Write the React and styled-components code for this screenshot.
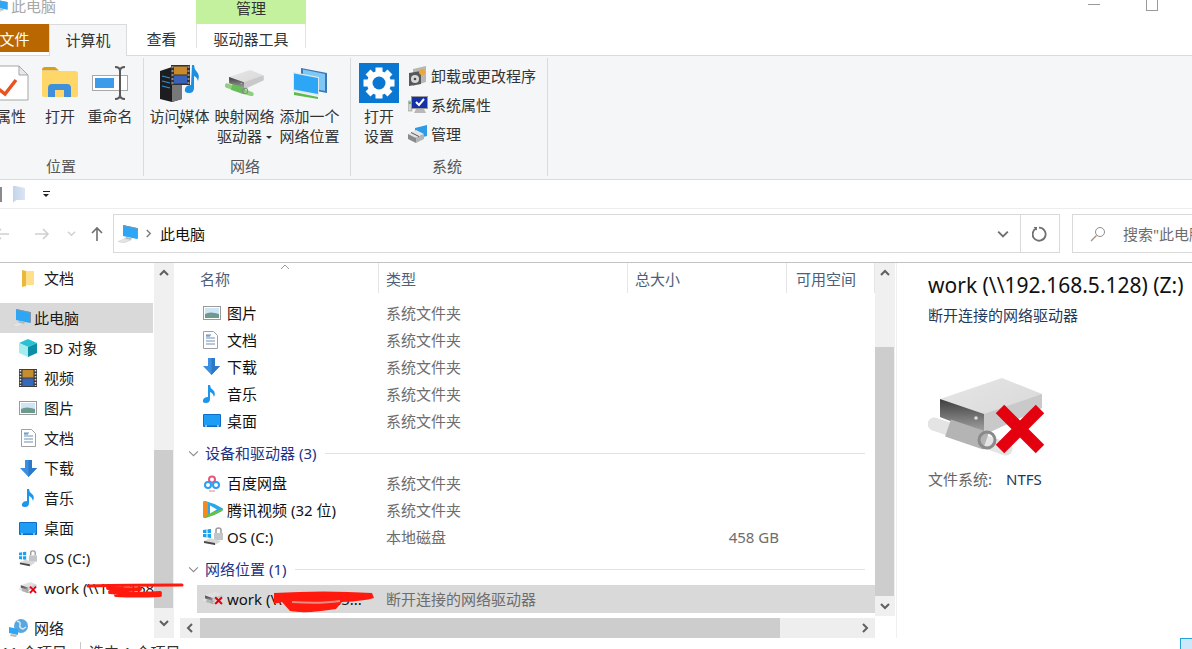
import React from 'react'
import styled, { createGlobalStyle } from 'styled-components'

/* drawings */
const Chevron = ({ dir = 'down', size = 10, color = '#606060', weight = 2 }) => {
  const turn = { down: 0, up: 180, left: 90, right: -90 }[dir]
  return (
    <svg width={size} height={size} viewBox="0 0 10 10">
      <path d="M1 3l4 4 4-4" fill="none" stroke={color} strokeWidth={weight} transform={`rotate(${turn} 5 5)`} />
    </svg>
  )
}

const ArrowIcon = ({ dir = 'right', color = '#d0d0d0', size = 16 }) => (
  <svg width={size} height={size} viewBox="0 0 16 16">
    <path d="M1 8h13M9 3l5 5-5 5" fill="none" stroke={color} strokeWidth="1.6" transform={dir === 'left' ? 'rotate(180 8 8)' : dir === 'up' ? 'rotate(-90 8 8)' : undefined} />
  </svg>
)

const PropsIcon = () => (
  <svg width="36" height="36" viewBox="0 0 36 36">
    <path d="M1 1h25l9 9v25H1z" fill="#fff" stroke="#a6a6a6" />
    <path d="M26 1v9h9z" fill="#e8e8e8" stroke="#a6a6a6" />
    <path d="M3 22l9 7 11-14" fill="none" stroke="#e8531f" strokeWidth="3.4" />
  </svg>
)

const OpenIcon = () => (
  <svg width="36" height="32" viewBox="0 0 36 32">
    <path d="M0 3q0-3 3-3h10l4 3.500h-17z" fill="#d9a010" />
    <path d="M0 4h33q3 0 3 3v21q0 2-2 2H2q-2 0-2-2z" fill="#ffd768" />
    <path d="M6 30V21q0-4 4-4h15q4 0 4 4v9h-7v-7h-9v7z" fill="#3f90d8" />
  </svg>
)

const RenameIcon = () => (
  <svg width="36" height="34" viewBox="0 0 36 34">
    <rect x="0.500" y="9.500" width="35" height="15" fill="#fff" stroke="#a8a8a8" />
    <rect x="3" y="12" width="19" height="10" fill="#3d9be9" />
    <path d="M23 1q5 0 5 4v24q0 4-5 4M33 1q-5 0-5 4v24q0 4 5 4" fill="none" stroke="#5a5a5a" strokeWidth="2" />
  </svg>
)

const MediaIcon = () => (
  <svg width="41" height="38" viewBox="0 0 41 38">
    <path d="M1 7l12-4 10 3v29l-10 3-12-3z" fill="#1d1d1f" />
    <path d="M13 38V9l10-3v29z" fill="#77787a" />
    <path d="M3 12l8 2M3 17l8 2M3 22l8 2" stroke="#2f8fe0" strokeWidth="1.200" />
    <rect x="12" y="1" width="19" height="20" fill="#333" />
    <rect x="15" y="2.500" width="13" height="8" fill="#c98a2c" />
    <rect x="15" y="11.500" width="13" height="8" fill="#3a62b8" />
    <path d="M12.500 3h2M12.500 7h2M12.500 11h2M12.500 15h2M12.500 19h2M28.500 3h2M28.500 7h2M28.500 11h2M28.500 15h2M28.500 19h2" stroke="#ddd" />
    <path d="M33 1h2q0 4 3 7t1 9q-1-4-4-5v12q0 5-5 5t-4-4 6-4z" fill="#1c8fe3" />
  </svg>
)

const DriveIcon = ({ width, tube = '#b4b4b4', end = '#e4e4e4', cross }) => (
  <svg width={width} viewBox="0 0 118 78" style={{ display: 'block' }}>
    <defs>
      <linearGradient id="driveFront" x1="0" y1="0" x2="0" y2="1">
        <stop offset="0" stopColor="#3e3e3e" />
        <stop offset="1" stopColor="#a9a9a9" />
      </linearGradient>
      <linearGradient id="driveTop" x1="0" y1="0" x2="1" y2="1">
        <stop offset="0" stopColor="#e6e6e6" />
        <stop offset="1" stopColor="#d6d6d6" />
      </linearGradient>
    </defs>
    <path d="M6 46L78 71" stroke={end} strokeWidth="13" strokeLinecap="round" />
    <path d="M12 21L74 0l40 16v14L60 55l-4 1-44-17z" fill="url(#driveTop)" />
    <path d="M56 36l58-20v14L60 55l-4 1z" fill="#c9c9c9" />
    <path d="M12 21l44 15v20L12 39z" fill="url(#driveFront)" />
    <circle cx="48" cy="40" r="1.800" fill="#ddd" />
    <path d="M20 50L58 63" stroke={tube} strokeWidth="18" />
    <circle cx="59" cy="62" r="8" fill="none" stroke="#8a8a8a" strokeWidth="3" />
    {cross && <path d="M72 31l40 40M112 31L72 71" stroke="#e3000f" strokeWidth="12" />}
  </svg>
)

const NetPlaceIcon = () => (
  <svg width="36" height="32" viewBox="0 0 36 32">
    <path d="M9 1l26 5v20l-26-5z" fill="#3a78b5" />
    <path d="M11 2.500l22 4.500v17l-22-4.500z" fill="#7fc7f5" />
    <path d="M1 5l26 5v19l-26-5z" fill="#dfe8ef" />
    <path d="M2 6.500l24 4.500v16l-24-4.500z" fill="#2da7f5" />
    <path d="M2 25l24 5v2l-24-4z" fill="#5dbb4e" />
  </svg>
)

const GearTile = () => (
  <svg width="40" height="40" viewBox="0 0 40 40">
    <rect width="40" height="40" fill="#0a78d2" />
    {[0, 45, 90, 135, 180, 225, 270, 315].map((a) => (
      <rect key={a} x="16.500" y="4.500" width="7" height="7" fill="#fff" transform={`rotate(${a} 20 20)`} />
    ))}
    <circle cx="20" cy="20" r="12" fill="#fff" />
    <circle cx="20" cy="20" r="6.500" fill="#0a78d2" />
  </svg>
)

const UninstallIcon = () => (
  <svg width="20" height="20" viewBox="0 0 20 20">
    <path d="M5 3l13-3v16l-13 4z" fill="#b8b8b0" />
    <path d="M1 7l12-2v13l-12 2z" fill="#55585a" />
    <circle cx="7" cy="13" r="4" fill="#d8d8d8" />
    <circle cx="7" cy="13" r="1.300" fill="#4a4a4a" />
    <circle cx="14" cy="6" r="3" fill="#f0a53a" />
  </svg>
)

const SysPropsIcon = () => (
  <svg width="20" height="18" viewBox="0 0 20 18">
    <rect x="0" y="5" width="4" height="10" fill="#cfd2d2" stroke="#888" strokeWidth="0.500" />
    <rect x="0.800" y="6" width="2" height="2" fill="#4cc04c" />
    <rect x="3.500" y="0.500" width="16" height="12" fill="#1630a8" stroke="#9a9a9a" />
    <path d="M8 6l3 3 5-6" fill="none" stroke="#fff" strokeWidth="2" />
    <path d="M8 13h8l2 4H6z" fill="#b8b8b8" />
  </svg>
)

const ManageIcon = () => (
  <svg width="20" height="18" viewBox="0 0 20 18">
    <path d="M7 3l12-3v11l-12 3z" fill="#2e9be6" />
    <path d="M0 9l8-4 8 4-8 4z" fill="#e4e4e4" />
    <path d="M0 9v5l8 4v-5z" fill="#8a8a8a" />
    <path d="M8 13v5l8-4V9z" fill="#b5b5b5" />
    <path d="M3 7.500l8 4" stroke="#555" />
  </svg>
)

const ComputerIcon = ({ width = 20 }) => (
  <svg width={width} viewBox="0 0 20 18" style={{ display: 'block' }}>
    <path d="M5 0l14 3v11L5 11z" fill="#2da7f5" />
    <path d="M5 0l14 3v1L5 1zM19 3v11l1-.5V3z" fill="#7d97ac" />
    <path d="M8 12l6 1.500-1 1.500-6-1.200z" fill="#aeb3b6" />
    <path d="M0 16.500l7-3 6 1.500-7 3z" fill="#e2e4e6" stroke="#c9ccce" strokeWidth="0.500" />
  </svg>
)

const CubeIcon = () => (
  <svg width="18" height="18" viewBox="0 0 18 18">
    <path d="M9 0l9 4-9 4-9-4z" fill="#27c3d5" />
    <path d="M0 4l9 4v10l-9-4z" fill="#a5ecef" />
    <path d="M9 8l9-4v10l-9 4z" fill="#0b8fa6" />
  </svg>
)

const FilmIcon = () => (
  <svg width="18" height="18" viewBox="0 0 18 18">
    <rect width="18" height="18" fill="#3d3d3d" />
    <rect x="3.500" y="1" width="11" height="7.500" fill="#c68d2e" />
    <rect x="3.500" y="9.500" width="11" height="7.500" fill="#3868bc" />
    <path d="M1.500 1v16M16.500 1v16" stroke="#ddd" strokeWidth="1.500" strokeDasharray="1.500 1.500" />
  </svg>
)

const PictureIcon = () => (
  <svg width="18" height="14" viewBox="0 0 18 14">
    <rect x="0.500" y="0.500" width="17" height="13" fill="#fff" stroke="#9a9a9a" />
    <rect x="2" y="2" width="14" height="10" fill="#cfe4f5" />
    <path d="M2 8q5-3 14 0v4H2z" fill="#6d9a8e" />
  </svg>
)

const DocIcon = () => (
  <svg width="15" height="18" viewBox="0 0 15 18">
    <path d="M0.500 0.500h10l4 4v13h-14z" fill="#fff" stroke="#a0a0a0" />
    <path d="M3 4h5M3 7h9M3 10h9M3 13h9" stroke="#6f8fb0" />
    <path d="M3 5h4" stroke="#2d7fd0" />
  </svg>
)

const DownloadIcon = () => (
  <svg width="17" height="17" viewBox="0 0 17 17">
    <path d="M5 0h7v8h5l-8.500 9L0 8h5z" fill="#3a8fe0" />
    <path d="M8.500 0h3.500v8h5l-8.500 9z" fill="#2d78c8" />
  </svg>
)

const NoteIcon = () => (
  <svg width="12" height="18" viewBox="0 0 12 18">
    <path d="M5 0h2q0 3 3 5t1 7q-1-4-4-5v7q0 4-4 4t-3-3 5-3z" fill="#1c96ec" />
  </svg>
)

const DesktopIcon = () => (
  <svg width="18" height="13" viewBox="0 0 18 13">
    <rect width="18" height="13" rx="1" fill="#0f6cc8" />
    <rect x="1" y="1" width="16" height="10.500" fill="#1f9cf3" />
    <path d="M2 12h2M14 12h2" stroke="#fff" />
  </svg>
)

const OsDriveIcon = () => (
  <svg width="20" height="19" viewBox="0 0 20 19">
    <path d="M0 3l3.500-.5V6H0zM4.500 2.300L8 2v4H4.500zM0 7h3.500v3.500L0 10zM4.500 7H8v4l-3.500-.5z" fill="#19a3ee" />
    <path d="M13 6V3q0-2 2.500-2T18 3v3" fill="none" stroke="#9a9a9a" strokeWidth="1.500" />
    <rect x="11" y="6" width="9" height="7" fill="#c3c6c8" />
    <path d="M1 14l6-3 11 3-6 4z" fill="#d8d8d8" />
    <path d="M1 14l11 2v2L1 16z" fill="#4a4a4a" />
  </svg>
)

const GlobeIcon = () => (
  <svg width="20" height="18" viewBox="0 0 20 18">
    <circle cx="12" cy="7" r="7" fill="#5aa7df" />
    <path d="M8 2q4 1 3 4t3 4l3-2" fill="none" stroke="#d6ebf8" strokeWidth="1.500" />
    <path d="M0 8l9 2v6l-9-2z" fill="#2da7f5" />
    <path d="M2 15l6 1-1 2-6-1z" fill="#b5b9bc" />
  </svg>
)

const BaiduIcon = () => (
  <svg width="18" height="18" viewBox="0 0 18 18">
    <circle cx="9" cy="5.500" r="3" fill="none" stroke="#e9567c" strokeWidth="2" />
    <circle cx="5" cy="11" r="3" fill="none" stroke="#2b9ff2" strokeWidth="2" />
    <circle cx="13" cy="11" r="3" fill="none" stroke="#2b9ff2" strokeWidth="2" />
    <path d="M6 17h6" stroke="#f1a9bb" strokeWidth="1.500" />
  </svg>
)

const TencentIcon = () => (
  <svg width="20" height="19" viewBox="0 0 20 19">
    <path d="M2 1q9 2 17 7 2 1.500 0 3-8 5-17 7-2 0-2-2V3q0-2 2-2z" fill="#2aa7e8" />
    <path d="M2 1q-2 0-2 2v13q0 2 2 2l3-1V2z" fill="#f58a1f" />
    <path d="M2 18q8-2 17-7l1-2.500L5 14z" fill="#67c23a" />
    <path d="M7 5.500l7 4-7 4z" fill="#fff" />
  </svg>
)

const icons = {
  cube: CubeIcon,
  film: FilmIcon,
  picture: PictureIcon,
  doc: DocIcon,
  download: DownloadIcon,
  note: NoteIcon,
  desktop: DesktopIcon,
  os: OsDriveIcon,
  baidu: BaiduIcon,
  tencent: TencentIcon,
  work: () => <DriveIcon width={20} cross />
}

/* the red pen strokes someone drew over the address */
const NavScribble = () => (
  <ScribbleBox $left={86} $top={9} $width={98}>
    <svg width="98" height="18" viewBox="0 0 98 18">
      <path d="M2 4q40 -1 94 -1" fill="none" stroke="#ff1a0d" strokeWidth="3" strokeLinecap="round" />
      <path d="M22 6q20 2 32 1M24 10q30 3 50 1M30 13q20 1 44 0" fill="none" stroke="#ff1a0d" strokeWidth="4" strokeLinecap="round" />
    </svg>
  </ScribbleBox>
)

const RowScribble = () => (
  <ScribbleBox $left={77} $top={6} $width={101}>
    <svg width="101" height="22" viewBox="0 0 101 22">
      <path d="M0 2q50-3 98 0l2 5q-10 3-32 4l-6 7q-30 5-46 2l-8-9q-6 2-8 1z" fill="#ff1a0d" />
      <path d="M18 11q28 2 48-1" stroke="#e88a84" strokeWidth="2" fill="none" />
    </svg>
  </ScribbleBox>
)

const navItems = [
  { id: 'cube', label: '3D 对象' },
  { id: 'film', label: '视频' },
  { id: 'picture', label: '图片' },
  { id: 'doc', label: '文档' },
  { id: 'download', label: '下载' },
  { id: 'note', label: '音乐' },
  { id: 'desktop', label: '桌面' },
  { id: 'os', label: 'OS (C:)' }
]

const folders = [
  { id: 'picture', name: '图片' },
  { id: 'doc', name: '文档' },
  { id: 'download', name: '下载' },
  { id: 'note', name: '音乐' },
  { id: 'desktop', name: '桌面' }
]

const devices = [
  { id: 'baidu', name: '百度网盘', type: '系统文件夹' },
  { id: 'tencent', name: '腾讯视频 (32 位)', type: '系统文件夹' },
  { id: 'os', name: 'OS (C:)', type: '本地磁盘', size: '458 GB' }
]

const FileRow = ({ id, name, type = '系统文件夹', size, selected, children }) => {
  const Icon = icons[id]
  return (
    <Row $selected={selected}>
      <NameCell>
        <IconSlot>
          <Icon />
        </IconSlot>
        <RowName>{name}</RowName>
      </NameCell>
      <TypeCell>{type}</TypeCell>
      <SizeCell>{size}</SizeCell>
      {children}
    </Row>
  )
}

const GroupTitle = ({ children }) => (
  <GroupHeader>
    <Chevron size={11} color="#8c8c8c" weight={1} />
    <GroupName>{children}</GroupName>
    <GroupLine />
  </GroupHeader>
)

const App = () => (
  <Window>
    <GlobalStyle />
    <TitleBar>
      <TitleText>
        <TitleIcon>
          <ComputerIcon width={14} />
        </TitleIcon>
        此电脑
      </TitleText>
      <ManageHeader>管理</ManageHeader>
      <WindowButtons>
        <MinButton />
        <MaxButton />
      </WindowButtons>
    </TitleBar>

    <TabRow>
      <FileTab>文件</FileTab>
      <Tab $active $width={78}>计算机</Tab>
      <Tab $width={69}>查看</Tab>
      <ToolTab>驱动器工具</ToolTab>
    </TabRow>

    <Ribbon>
      <Group $width={157} $pull={13}>
        <GroupBody>
          <LargeButton $width={48}>
            <LargeIcon><PropsIcon /></LargeIcon>
            属性
          </LargeButton>
          <LargeButton $width={50}>
            <LargeIcon><OpenIcon /></LargeIcon>
            打开
          </LargeButton>
          <LargeButton $width={50}>
            <LargeIcon><RenameIcon /></LargeIcon>
            重命名
          </LargeButton>
        </GroupBody>
        <GroupLabel $shift={8}>位置</GroupLabel>
      </Group>
      <Group $width={207}>
        <GroupBody $pad={3}>
          <LargeButton $width={65}>
            <LargeIcon><MediaIcon /></LargeIcon>
            访问媒体
            <Caret />
          </LargeButton>
          <LargeButton $width={65}>
            <LargeIcon><DriveIcon width={40} tube="#66bd58" end="#8fd07f" /></LargeIcon>
            映射网络
            <span>驱动器 <InlineCaret /></span>
          </LargeButton>
          <LargeButton $width={65}>
            <LargeIcon><NetPlaceIcon /></LargeIcon>
            添加一个
            <span>网络位置</span>
          </LargeButton>
        </GroupBody>
        <GroupLabel $shift={4}>网络</GroupLabel>
      </Group>
      <Group $width={197}>
        <GroupBody $pad={7}>
          <LargeButton $width={42}>
            <LargeIcon><GearTile /></LargeIcon>
            打开
            <span>设置</span>
          </LargeButton>
          <SmallColumn>
            <SmallItem><SmallIcon><UninstallIcon /></SmallIcon>卸载或更改程序</SmallItem>
            <SmallItem><SmallIcon><SysPropsIcon /></SmallIcon>系统属性</SmallItem>
            <SmallItem><SmallIcon><ManageIcon /></SmallIcon>管理</SmallItem>
          </SmallColumn>
        </GroupBody>
        <GroupLabel $shift={4}>系统</GroupLabel>
      </Group>
    </Ribbon>

    <QuickBar>
      <QuickMark />
      <QuickFolder />
      <QuickMenu />
    </QuickBar>

    <AddressRow>
      <NavCell $width={40} $pull={18}><ArrowIcon dir="left" /></NavCell>
      <NavCell $width={40}><ArrowIcon /></NavCell>
      <NavCell $width={18}><Chevron size={9} color="#d0d0d0" weight={1.500} /></NavCell>
      <NavCell $width={33}><ArrowIcon dir="up" color="#6f6f6f" /></NavCell>
      <AddressBox>
        <ComputerIcon />
        <CrumbArrow><Chevron dir="right" size={9} color="#7a7a7a" weight={1.500} /></CrumbArrow>
        <Crumb>此电脑</Crumb>
        <AddressMenu><Chevron size={12} color="#707070" weight={1.600} /></AddressMenu>
        <RefreshCell>
          <svg width="16" height="16" viewBox="0 0 16 16">
            <path d="M4 2.500a6.500 6.500 0 1 0 3-.8" fill="none" stroke="#6f6f6f" strokeWidth="1.800" />
            <path d="M1.500 1l3.500 0 0 3.500z" fill="#6f6f6f" />
          </svg>
        </RefreshCell>
      </AddressBox>
      <SearchBox>
        <svg width="16" height="16" viewBox="0 0 16 16">
          <circle cx="10" cy="6" r="4.500" fill="none" stroke="#8c8c8c" />
          <path d="M6.500 9.500L1 15" stroke="#b08a70" strokeWidth="1.200" />
        </svg>
        <SearchText>搜索"此电脑"</SearchText>
      </SearchBox>
    </AddressRow>

    <Body>
      <NavPane>
        <NavRow $indent={22} $gap={10}>
          <NavIcon $width={12}>
            <svg width="12" height="17" viewBox="0 0 12 17">
              <path d="M0 0l4 1v15l-4 1z" fill="#e8b93a" />
              <path d="M4 1h8v14H4z" fill="#ffdf8a" />
            </svg>
          </NavIcon>
          文档
        </NavRow>
        <NavRow $indent={11} $gap={3} $selected $space={10}>
          <NavIcon $width={20}><ComputerIcon /></NavIcon>
          此电脑
        </NavRow>
        {navItems.map(({ id, label }) => {
          const Icon = icons[id]
          return (
            <NavRow key={id} $indent={19} $gap={7}>
              <NavIcon $width={18}><Icon /></NavIcon>
              {label}
            </NavRow>
          )
        })}
        <NavRow $indent={19} $gap={7}>
          <NavIcon $width={18}><DriveIcon width={19} cross /></NavIcon>
          work (\\192.168
          <NavScribble />
        </NavRow>
        <NavRow $indent={9} $gap={5} $space={10}>
          <NavIcon $width={20}><GlobeIcon /></NavIcon>
          网络
        </NavRow>
      </NavPane>

      <ScrollTrack $height={375}>
        <ScrollButton $height={20}><Chevron dir="up" /></ScrollButton>
        <ScrollThumb $top={167} $height={158} />
        <ScrollButton $height={30}><Chevron /></ScrollButton>
      </ScrollTrack>

      <ListPane>
        <ListMain>
          <ColumnHeader>
            <SortMark><Chevron dir="up" size={10} color="#9a9a9a" weight={1} /></SortMark>
            <HeaderCell $width={199} $pad={20}>名称</HeaderCell>
            <HeaderCell $width={249}>类型</HeaderCell>
            <HeaderCell $width={159}>总大小</HeaderCell>
            <HeaderCell $width={88} $pad={9}>可用空间</HeaderCell>
          </ColumnHeader>
          <Rows>
            {folders.map((f) => <FileRow key={f.name} {...f} />)}
            <GroupTitle>设备和驱动器 (3)</GroupTitle>
            {devices.map((d) => <FileRow key={d.name} {...d} />)}
            <GroupTitle>网络位置 (1)</GroupTitle>
            <FileRow id="work" name="work (\\192.168.5..." type="断开连接的网络驱动器" selected>
              <RowScribble />
            </FileRow>
          </Rows>
        </ListMain>
        <ScrollTrack $height={353}>
          <ScrollButton $height={20}><Chevron dir="up" /></ScrollButton>
          <ScrollThumb $top={64} $height={249} />
          <ScrollButton $height={20}><Chevron /></ScrollButton>
        </ScrollTrack>
        <HScroll>
          <HScrollButton><Chevron dir="left" /></HScrollButton>
          <HThumb />
          <HScrollButton><Chevron dir="right" /></HScrollButton>
        </HScroll>
      </ListPane>

      <Preview>
        <PreviewTitle>work (\\192.168.5.128) (Z:)</PreviewTitle>
        <PreviewSub>断开连接的网络驱动器</PreviewSub>
        <PreviewIcon><DriveIcon width={118} cross /></PreviewIcon>
        <PreviewMeta>
          <MetaLabel>文件系统:</MetaLabel>
          <MetaValue>NTFS</MetaValue>
        </PreviewMeta>
      </Preview>
    </Body>

    <StatusBar>
      <StatusText>11 个项目</StatusText>
      <StatusSep />
      <StatusText>选中 1 个项目</StatusText>
      <ViewToggle />
    </StatusBar>
  </Window>
)

export default App

const GlobalStyle = createGlobalStyle`
  html, body {
    margin: 0;
    padding: 0;
    background: #fff;
  }
  * {
    box-sizing: border-box;
  }
`

const Window = styled.div`
  width: 1192px;
  height: 649px;
  overflow: hidden;
  background: #fff;
  color: #222;
  font-family: 'Noto Sans', 'Noto Sans CJK SC', sans-serif;
  font-size: 15px;
  line-height: 20px;
  display: flex;
  flex-direction: column;
`

const TitleBar = styled.div`
  display: flex;
  height: 24px;
  flex-shrink: 0;
`

const TitleText = styled.div`
  width: 196px;
  margin-top: -4px;
  display: flex;
  align-items: center;
  height: 20px;
  color: #a8a8a8;
  gap: 3px;
`

const TitleIcon = styled.span`
  display: flex;
  margin-left: -6px;
`

const ManageHeader = styled.div`
  width: 110px;
  background: #c3f19d;
  text-align: center;
  line-height: 16px;
  color: #333;
`

const WindowButtons = styled.div`
  margin-left: auto;
  margin-right: 34px;
  display: flex;
  gap: 46px;
  align-items: flex-start;
`

const MinButton = styled.div`
  width: 12px;
  height: 1px;
  margin-top: 4px;
  background: #999;
`

const MaxButton = styled.div`
  width: 12px;
  height: 12px;
  margin-top: -1px;
  border: 1px solid #999;
`

const TabRow = styled.div`
  display: flex;
  height: 32px;
  flex-shrink: 0;
  border-bottom: 1px solid #dadbdc;
`

const FileTab = styled.div`
  width: 69px;
  height: 28px;
  margin-left: -20px;
  background: #b96700;
  color: #fff;
  text-align: center;
  line-height: 30px;
`

const Tab = styled.div`
  width: ${(p) => p.$width}px;
  height: 32px;
  line-height: 31px;
  text-align: center;
  color: #333;
  ${(p) => p.$active && `
    background: #f5f6f7;
    border: 1px solid #dadbdc;
    border-bottom: none;
  `}
`

const ToolTab = styled.div`
  width: 110px;
  height: 24px;
  line-height: 31px;
  text-align: center;
  color: #333;
  border-left: 1px solid #e2e2e2;
  border-right: 1px solid #e2e2e2;
`

const Ribbon = styled.div`
  display: flex;
  height: 124px;
  flex-shrink: 0;
  padding: 2px 0 3px;
  background: #f5f6f7;
  border-bottom: 1px solid #dadbdc;
`

const Group = styled.div`
  width: ${(p) => p.$width}px;
  margin-left: ${(p) => (p.$pull ? -p.$pull : 0)}px;
  border-right: 1px solid #dadbdc;
  display: flex;
  flex-direction: column;
`

const GroupBody = styled.div`
  flex: 1;
  display: flex;
  padding: 5px 0 0 ${(p) => p.$pad || 0}px;
`

const GroupLabel = styled.div`
  height: 20px;
  padding-right: ${(p) => p.$shift || 0}px;
  text-align: center;
  color: #555;
`

const LargeButton = styled.div`
  width: ${(p) => p.$width}px;
  flex-shrink: 0;
  display: flex;
  flex-direction: column;
  align-items: center;
  white-space: nowrap;
  color: #333;
`

const LargeIcon = styled.div`
  height: 40px;
  margin-bottom: 3px;
  display: flex;
  align-items: center;
  justify-content: center;
`

const Caret = styled.i`
  width: 0;
  height: 0;
  border: 3px solid transparent;
  border-top: 3px solid #333;
  border-bottom: none;
`

const InlineCaret = styled(Caret)`
  display: inline-block;
  vertical-align: middle;
`

const SmallColumn = styled.div`
  margin: -2px 0 0 8px;
`

const SmallItem = styled.div`
  height: 29px;
  display: flex;
  align-items: center;
  white-space: nowrap;
  color: #333;
`

const SmallIcon = styled.span`
  width: 23px;
  display: flex;
`

const QuickBar = styled.div`
  height: 29px;
  flex-shrink: 0;
  display: flex;
  align-items: center;
  border-bottom: 1px solid #ededed;
`

const QuickMark = styled.div`
  width: 2px;
  height: 15px;
  background: #8a8a8a;
`

const QuickFolder = styled.div`
  width: 12px;
  height: 17px;
  margin-left: 11px;
  background: linear-gradient(90deg, #c4d4ea, #dbe5f3);
  clip-path: polygon(0 0, 100% 15%, 100% 85%, 30% 85%, 0 100%);
`

const QuickMenu = styled.div`
  width: 7px;
  height: 6px;
  margin-left: 18px;
  border-top: 1px solid #222;
  position: relative;
  &::after {
    content: '';
    position: absolute;
    left: 0;
    top: 2px;
    border: 3.500px solid transparent;
    border-top: 3.500px solid #222;
    border-bottom: none;
  }
`

const AddressRow = styled.div`
  height: 54px;
  flex-shrink: 0;
  padding-bottom: 9px;
  padding-top: 5px;
  display: flex;
  align-items: stretch;
  border-bottom: 1px solid #c2c2c2;
`

const NavCell = styled.div`
  width: ${(p) => p.$width}px;
  margin-left: ${(p) => (p.$pull ? -p.$pull : 0)}px;
  flex-shrink: 0;
  display: flex;
  align-items: center;
  justify-content: center;
`

const AddressBox = styled.div`
  width: 947px;
  flex-shrink: 0;
  display: flex;
  align-items: center;
  padding-left: 4px;
  border: 1px solid #d9d9d9;
`

const CrumbArrow = styled.span`
  display: flex;
  margin-left: 6px;
`

const Crumb = styled.span`
  margin-left: 7px;
  color: #111;
`

const AddressMenu = styled.span`
  margin-left: auto;
  margin-right: 11px;
  display: flex;
`

const RefreshCell = styled.span`
  width: 39px;
  height: 100%;
  display: flex;
  align-items: center;
  justify-content: center;
  border-left: 1px solid #d9d9d9;
`

const SearchBox = styled.div`
  width: 240px;
  flex-shrink: 0;
  margin-left: 12px;
  padding-left: 17px;
  display: flex;
  align-items: center;
  gap: 17px;
  border: 1px solid #d9d9d9;
`

const SearchText = styled.span`
  color: #6d6d6d;
  white-space: nowrap;
`

const Body = styled.div`
  height: 375px;
  flex-shrink: 0;
  display: flex;
`

const NavPane = styled.div`
  width: 154px;
  flex-shrink: 0;
`

const NavRow = styled.div`
  position: relative;
  height: 30px;
  width: 153px;
  margin-top: ${(p) => p.$space || 0}px;
  padding-left: ${(p) => p.$indent}px;
  display: flex;
  align-items: center;
  gap: ${(p) => p.$gap}px;
  color: #1a1a1a;
  white-space: nowrap;
  background: ${(p) => (p.$selected ? '#d9d9d9' : 'transparent')};
`

const NavIcon = styled.span`
  width: ${(p) => p.$width}px;
  flex-shrink: 0;
  display: flex;
  justify-content: center;
`

const ScribbleBox = styled.div`
  position: absolute;
  left: ${(p) => p.$left}px;
  top: ${(p) => p.$top}px;
  width: ${(p) => p.$width}px;
  z-index: 2;
  line-height: 0;
`

const ScrollTrack = styled.div`
  width: 20px;
  height: ${(p) => p.$height}px;
  flex-shrink: 0;
  background: #f0f0f0;
  display: flex;
  flex-direction: column;
`

const ScrollButton = styled.div`
  height: ${(p) => p.$height}px;
  flex-shrink: 0;
  display: flex;
  align-items: center;
  justify-content: center;
`

const ScrollThumb = styled.div`
  width: 19px;
  height: ${(p) => p.$height}px;
  margin-top: ${(p) => p.$top}px;
  flex-shrink: 0;
  background: #cdcdcd;
`

const ListPane = styled.div`
  width: 723px;
  flex-shrink: 0;
  padding-left: 6px;
  border-right: 1px solid #f0f0f0;
  display: grid;
  grid-template-columns: 695px 20px;
  grid-template-rows: 355px 20px;
`

const ListMain = styled.div`
  height: 355px;
  overflow: hidden;
`

const ColumnHeader = styled.div`
  position: relative;
  height: 30px;
  display: flex;
`

const SortMark = styled.span`
  position: absolute;
  left: 100px;
  top: -1px;
  display: flex;
`

const HeaderCell = styled.div`
  width: ${(p) => p.$width}px;
  height: 30px;
  padding-left: ${(p) => p.$pad || 7}px;
  line-height: 32px;
  color: #4c607a;
  border-right: 1px solid #e5e5e5;
  white-space: nowrap;
`

const Rows = styled.div`
  padding: 6px 0 0 17px;
`

const Row = styled.div`
  position: relative;
  height: ${(p) => (p.$selected ? 28 : 27)}px;
  display: grid;
  grid-template-columns: 182px 249px 159px 1fr;
  align-items: center;
  background: ${(p) => (p.$selected ? '#d9d9d9' : 'transparent')};
`

const NameCell = styled.div`
  display: flex;
  align-items: center;
  padding-left: 6px;
  min-width: 0;
`

const IconSlot = styled.span`
  width: 24px;
  flex-shrink: 0;
  display: flex;
`

const RowName = styled.span`
  white-space: nowrap;
  overflow: hidden;
  color: #111;
`

const TypeCell = styled.div`
  padding-left: 7px;
  color: #6d6d6d;
  white-space: nowrap;
`

const SizeCell = styled.div`
  padding-right: 8px;
  text-align: right;
  color: #6d6d6d;
`

const GroupHeader = styled.div`
  height: 26px;
  margin: 6px 10px 3px -9px;
  display: flex;
  align-items: center;
`

const GroupName = styled.span`
  margin-left: 6px;
  color: #1e3287;
  white-space: nowrap;
`

const GroupLine = styled.span`
  flex: 1;
  height: 1px;
  margin-left: 9px;
  background: #e2e2e2;
`

const HScroll = styled.div`
  height: 20px;
  background: #eee;
  display: flex;
`

const HScrollButton = styled.div`
  width: 20px;
  display: flex;
  align-items: center;
  justify-content: center;
`

const HThumb = styled.div`
  width: 580px;
  margin-right: auto;
  background: #cdcdcd;
`

const Preview = styled.div`
  flex: 1;
  padding: 8px 0 0 31px;
  white-space: nowrap;
`

const PreviewTitle = styled.div`
  font-size: 21px;
  line-height: 28px;
  color: #111;
`

const PreviewSub = styled.div`
  margin-top: 6px;
  color: #1e395b;
`

const PreviewIcon = styled.div`
  margin-top: 53px;
  height: 78px;
  line-height: 0;
`

const PreviewMeta = styled.div`
  margin-top: 13px;
  display: flex;
`

const MetaLabel = styled.span`
  width: 78px;
  color: #666;
`

const MetaValue = styled.span`
  color: #1e395b;
`

const StatusBar = styled.div`
  height: 11px;
  padding-top: 4px;
  display: flex;
  align-items: flex-start;
  padding-left: 1px;
  overflow: hidden;
`

const StatusText = styled.span`
  line-height: 20px;
  color: #333;
  white-space: nowrap;
`

const StatusSep = styled.i`
  width: 1px;
  height: 20px;
  margin: 0 8px 0 13px;
  background: #c8c8c8;
`

const ViewToggle = styled.span`
  width: 12px;
  height: 11px;
  margin-left: auto;
  margin-top: -4px;
  background: #cde8fa;
  border: 1px solid #26a0da;
  border-right: none;
  border-bottom: none;
`
